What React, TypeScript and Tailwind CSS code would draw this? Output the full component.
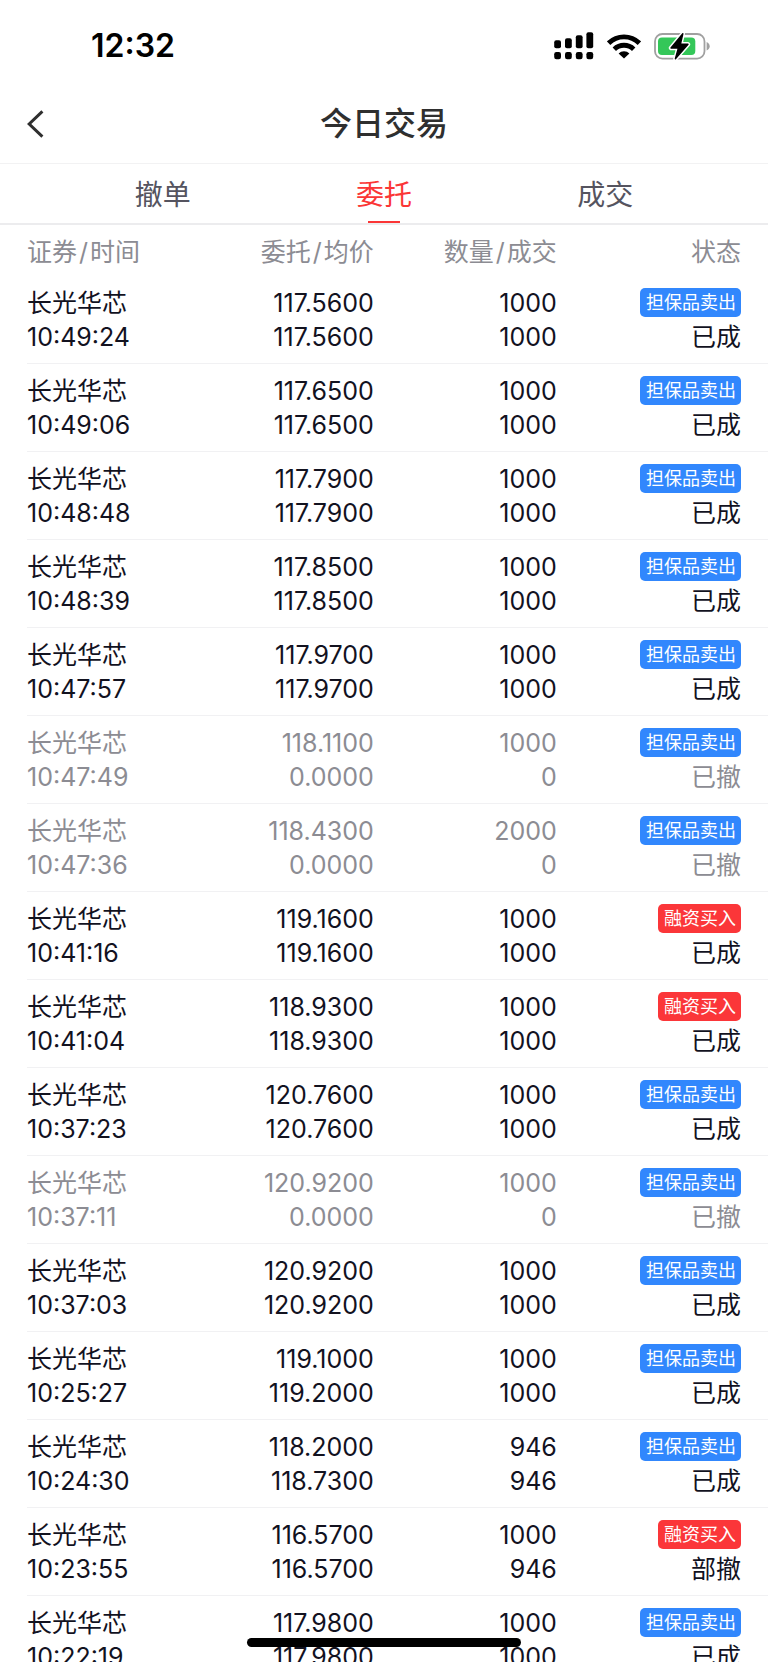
type Side = 'sell' | 'buy'

interface Order {
  time: string
  price: string
  average: string
  quantity: string
  filled: string
  side: Side
  status: string
}

const make = (
  time: string,
  price: string,
  average: string,
  quantity: string,
  filled: string,
  side: Side,
  status: string,
): Order => ({ time, price, average, quantity, filled, side, status })

const orders: Order[] = [
  make('10:49:24', '117.5600', '117.5600', '1000', '1000', 'sell', '已成'),
  make('10:49:06', '117.6500', '117.6500', '1000', '1000', 'sell', '已成'),
  make('10:48:48', '117.7900', '117.7900', '1000', '1000', 'sell', '已成'),
  make('10:48:39', '117.8500', '117.8500', '1000', '1000', 'sell', '已成'),
  make('10:47:57', '117.9700', '117.9700', '1000', '1000', 'sell', '已成'),
  make('10:47:49', '118.1100', '0.0000', '1000', '0', 'sell', '已撤'),
  make('10:47:36', '118.4300', '0.0000', '2000', '0', 'sell', '已撤'),
  make('10:41:16', '119.1600', '119.1600', '1000', '1000', 'buy', '已成'),
  make('10:41:04', '118.9300', '118.9300', '1000', '1000', 'buy', '已成'),
  make('10:37:23', '120.7600', '120.7600', '1000', '1000', 'sell', '已成'),
  make('10:37:11', '120.9200', '0.0000', '1000', '0', 'sell', '已撤'),
  make('10:37:03', '120.9200', '120.9200', '1000', '1000', 'sell', '已成'),
  make('10:25:27', '119.1000', '119.2000', '1000', '1000', 'sell', '已成'),
  make('10:24:30', '118.2000', '118.7300', '946', '946', 'sell', '已成'),
  make('10:23:55', '116.5700', '116.5700', '1000', '946', 'buy', '部撤'),
  make('10:22:19', '117.9800', '117.9800', '1000', '1000', 'sell', '已成'),
]

function SignalIcon() {
  return (
    <svg width="40" height="28" viewBox="0 0 40 28" aria-hidden="true">
      <rect x="0.2" y="8.3" width="6.8" height="8" rx="2" />
      <rect x="11" y="6.2" width="6.8" height="10.1" rx="2" />
      <rect x="21.8" y="3.2" width="6.8" height="13.1" rx="2" />
      <rect x="32.4" y="0.2" width="6.8" height="16.1" rx="2" />
      <rect x="0.2" y="20" width="6.8" height="7.2" rx="2.2" />
      <rect x="11" y="20" width="6.8" height="7.2" rx="2.2" />
      <rect x="21.8" y="20" width="6.8" height="7.2" rx="2.2" />
      <rect x="32.4" y="20" width="6.8" height="7.2" rx="2.2" />
    </svg>
  )
}

function WifiIcon() {
  return (
    <svg width="34" height="25" viewBox="0 0 34 25" aria-hidden="true">
      <g fill="none" stroke="#000" strokeWidth="4.9">
        <path d="M1.6 9.2a22 22 0 0 1 30.800 0" />
        <path d="M7.300 15.200a14 14 0 0 1 19.400 0" />
      </g>
      <path d="M17 24.600l-5.400-5.200a7.600 7.600 0 0 1 10.800 0z" />
    </svg>
  )
}

function BatteryIcon() {
  const bolt = 'M28.800 0.800L17 15h7.400L21.400 25.800L34 11.300h-7.600z'
  return (
    <svg width="57" height="27" viewBox="0 0 57 27" aria-hidden="true">
      <rect x="1" y="1" width="49.5" height="24.6" rx="7.4" fill="none" stroke="#a0a0a0" strokeWidth="1.8" />
      <path d="M52.6 9v8.6c1.9-.7 3.1-2.4 3.1-4.3s-1.2-3.6-3.1-4.3z" fill="#a0a0a0" />
      <rect x="4" y="4.4" width="37.3" height="17.6" rx="4" fill="#34c759" />
      <path d={bolt} fill="#fff" stroke="#fff" strokeWidth="4.4" strokeLinejoin="round" />
      <path d={bolt} stroke="#000" strokeWidth="1.4" strokeLinejoin="round" />
    </svg>
  )
}

function StatusBar() {
  return (
    <div className="flex h-[82px] shrink-0 items-center justify-between pt-[10px] pr-[57px] pl-[91px] text-black">
      <span className="text-[32px] leading-10 font-semibold">12:32</span>
      <div className="flex items-center gap-[13px]">
        <SignalIcon />
        <WifiIcon />
        <BatteryIcon />
      </div>
    </div>
  )
}

const tabs = ['撤单', '委托', '成交']

function Tabs() {
  return (
    <nav className="grid h-[62px] shrink-0 grid-cols-3 border-t border-b-2 border-t-[#f2f2f3] border-b-[#ececee] px-[52px]">
      {tabs.map((tab) => {
        const active = tab === '委托'
        return (
          <button
            key={tab}
            type="button"
            aria-current={active ? 'page' : undefined}
            className={
              active
                ? 'flex flex-col items-center justify-end text-[28px] leading-10 text-[#fb3636]'
                : 'flex flex-col items-center justify-end text-[28px] leading-10 text-[#55545f]'
            }
          >
            <span>{tab}</span>
            <span className={active ? 'mt-[6px] h-[2px] w-8 bg-[#fb3636]' : 'mt-[6px] h-[2px] w-8'} />
          </button>
        )
      })}
    </nav>
  )
}

function PairHeading({ first, second }: { first: string; second: string }) {
  return (
    <>
      {first}
      <span className="mx-[2px]">/</span>
      {second}
    </>
  )
}

function Badge({ side }: { side: Side }) {
  const base = 'flex h-[29px] items-center rounded-[5px] pr-[5px] pl-[6px] text-[18px] leading-6 text-white'
  return side === 'sell' ? (
    <span className={`${base} bg-[#3187fd]`}>担保品卖出</span>
  ) : (
    <span className={`${base} bg-[#fb3639]`}>融资买入</span>
  )
}

function OrderRow({ order }: { order: Order }) {
  const tone = order.status === '已撤' ? 'text-[#8c8c93]' : 'text-[#12121f]'
  return (
    <tr className={`border-b border-[#f1f1f3] ${tone}`}>
      <td className="pt-[10px] pb-[9px]">
        <div>长光华芯</div>
        <div>{order.time}</div>
      </td>
      <td className="pt-[10px] pb-[9px] text-right">
        <div>{order.price}</div>
        <div>{order.average}</div>
      </td>
      <td className="pt-[10px] pb-[9px] text-right">
        <div>{order.quantity}</div>
        <div>{order.filled}</div>
      </td>
      <td className="pt-[10px] pr-[27px] pb-[9px] text-right">
        <div className="flex h-[34px] items-start justify-end pt-[2px]">
          <Badge side={order.side} />
        </div>
        <div>{order.status}</div>
      </td>
    </tr>
  )
}

export default function App() {
  return (
    <div className="relative flex h-screen flex-col overflow-hidden bg-white font-['Inter','Noto_Sans_CJK_SC',sans-serif]">
      <StatusBar />
      <header className="grid h-[81px] shrink-0 grid-cols-[1fr_auto_1fr] items-center px-[26px] pt-[2px] text-[#2f2f2f]">
        <button type="button" aria-label="返回" className="flex h-11 w-11 items-center">
          <svg width="18" height="28" viewBox="0 0 18 28" fill="none" stroke="currentColor" strokeWidth="3" aria-hidden="true">
            <path d="M16.4 1.4L3.2 14l13.2 12.6" />
          </svg>
        </button>
        <h1 className="text-[32px] leading-10 font-medium">今日交易</h1>
      </header>
      <Tabs />
      <main className="min-h-0 flex-1 overflow-y-auto pl-[27px] [scrollbar-width:none]">
        <table className="w-full table-fixed border-collapse text-[25px] leading-[34px]">
          <colgroup>
            <col className="w-[22%]" />
            <col />
            <col className="w-[24.7%]" />
            <col className="w-[28.5%]" />
          </colgroup>
          <thead>
            <tr className="text-[#8c8c93]">
              <th className="pt-[10px] pb-[7px] text-left font-normal">
                <PairHeading first="证券" second="时间" />
              </th>
              <th className="pt-[10px] pb-[7px] text-right font-normal">
                <PairHeading first="委托" second="均价" />
              </th>
              <th className="pt-[10px] pb-[7px] text-right font-normal">
                <PairHeading first="数量" second="成交" />
              </th>
              <th className="pt-[10px] pr-[27px] pb-[7px] text-right font-normal">状态</th>
            </tr>
          </thead>
          <tbody>
            {orders.map((order) => (
              <OrderRow key={order.time} order={order} />
            ))}
          </tbody>
        </table>
      </main>
      <div className="absolute bottom-[15px] left-1/2 h-[9px] w-[274px] -translate-x-1/2 rounded-full bg-black" />
    </div>
  )
}
